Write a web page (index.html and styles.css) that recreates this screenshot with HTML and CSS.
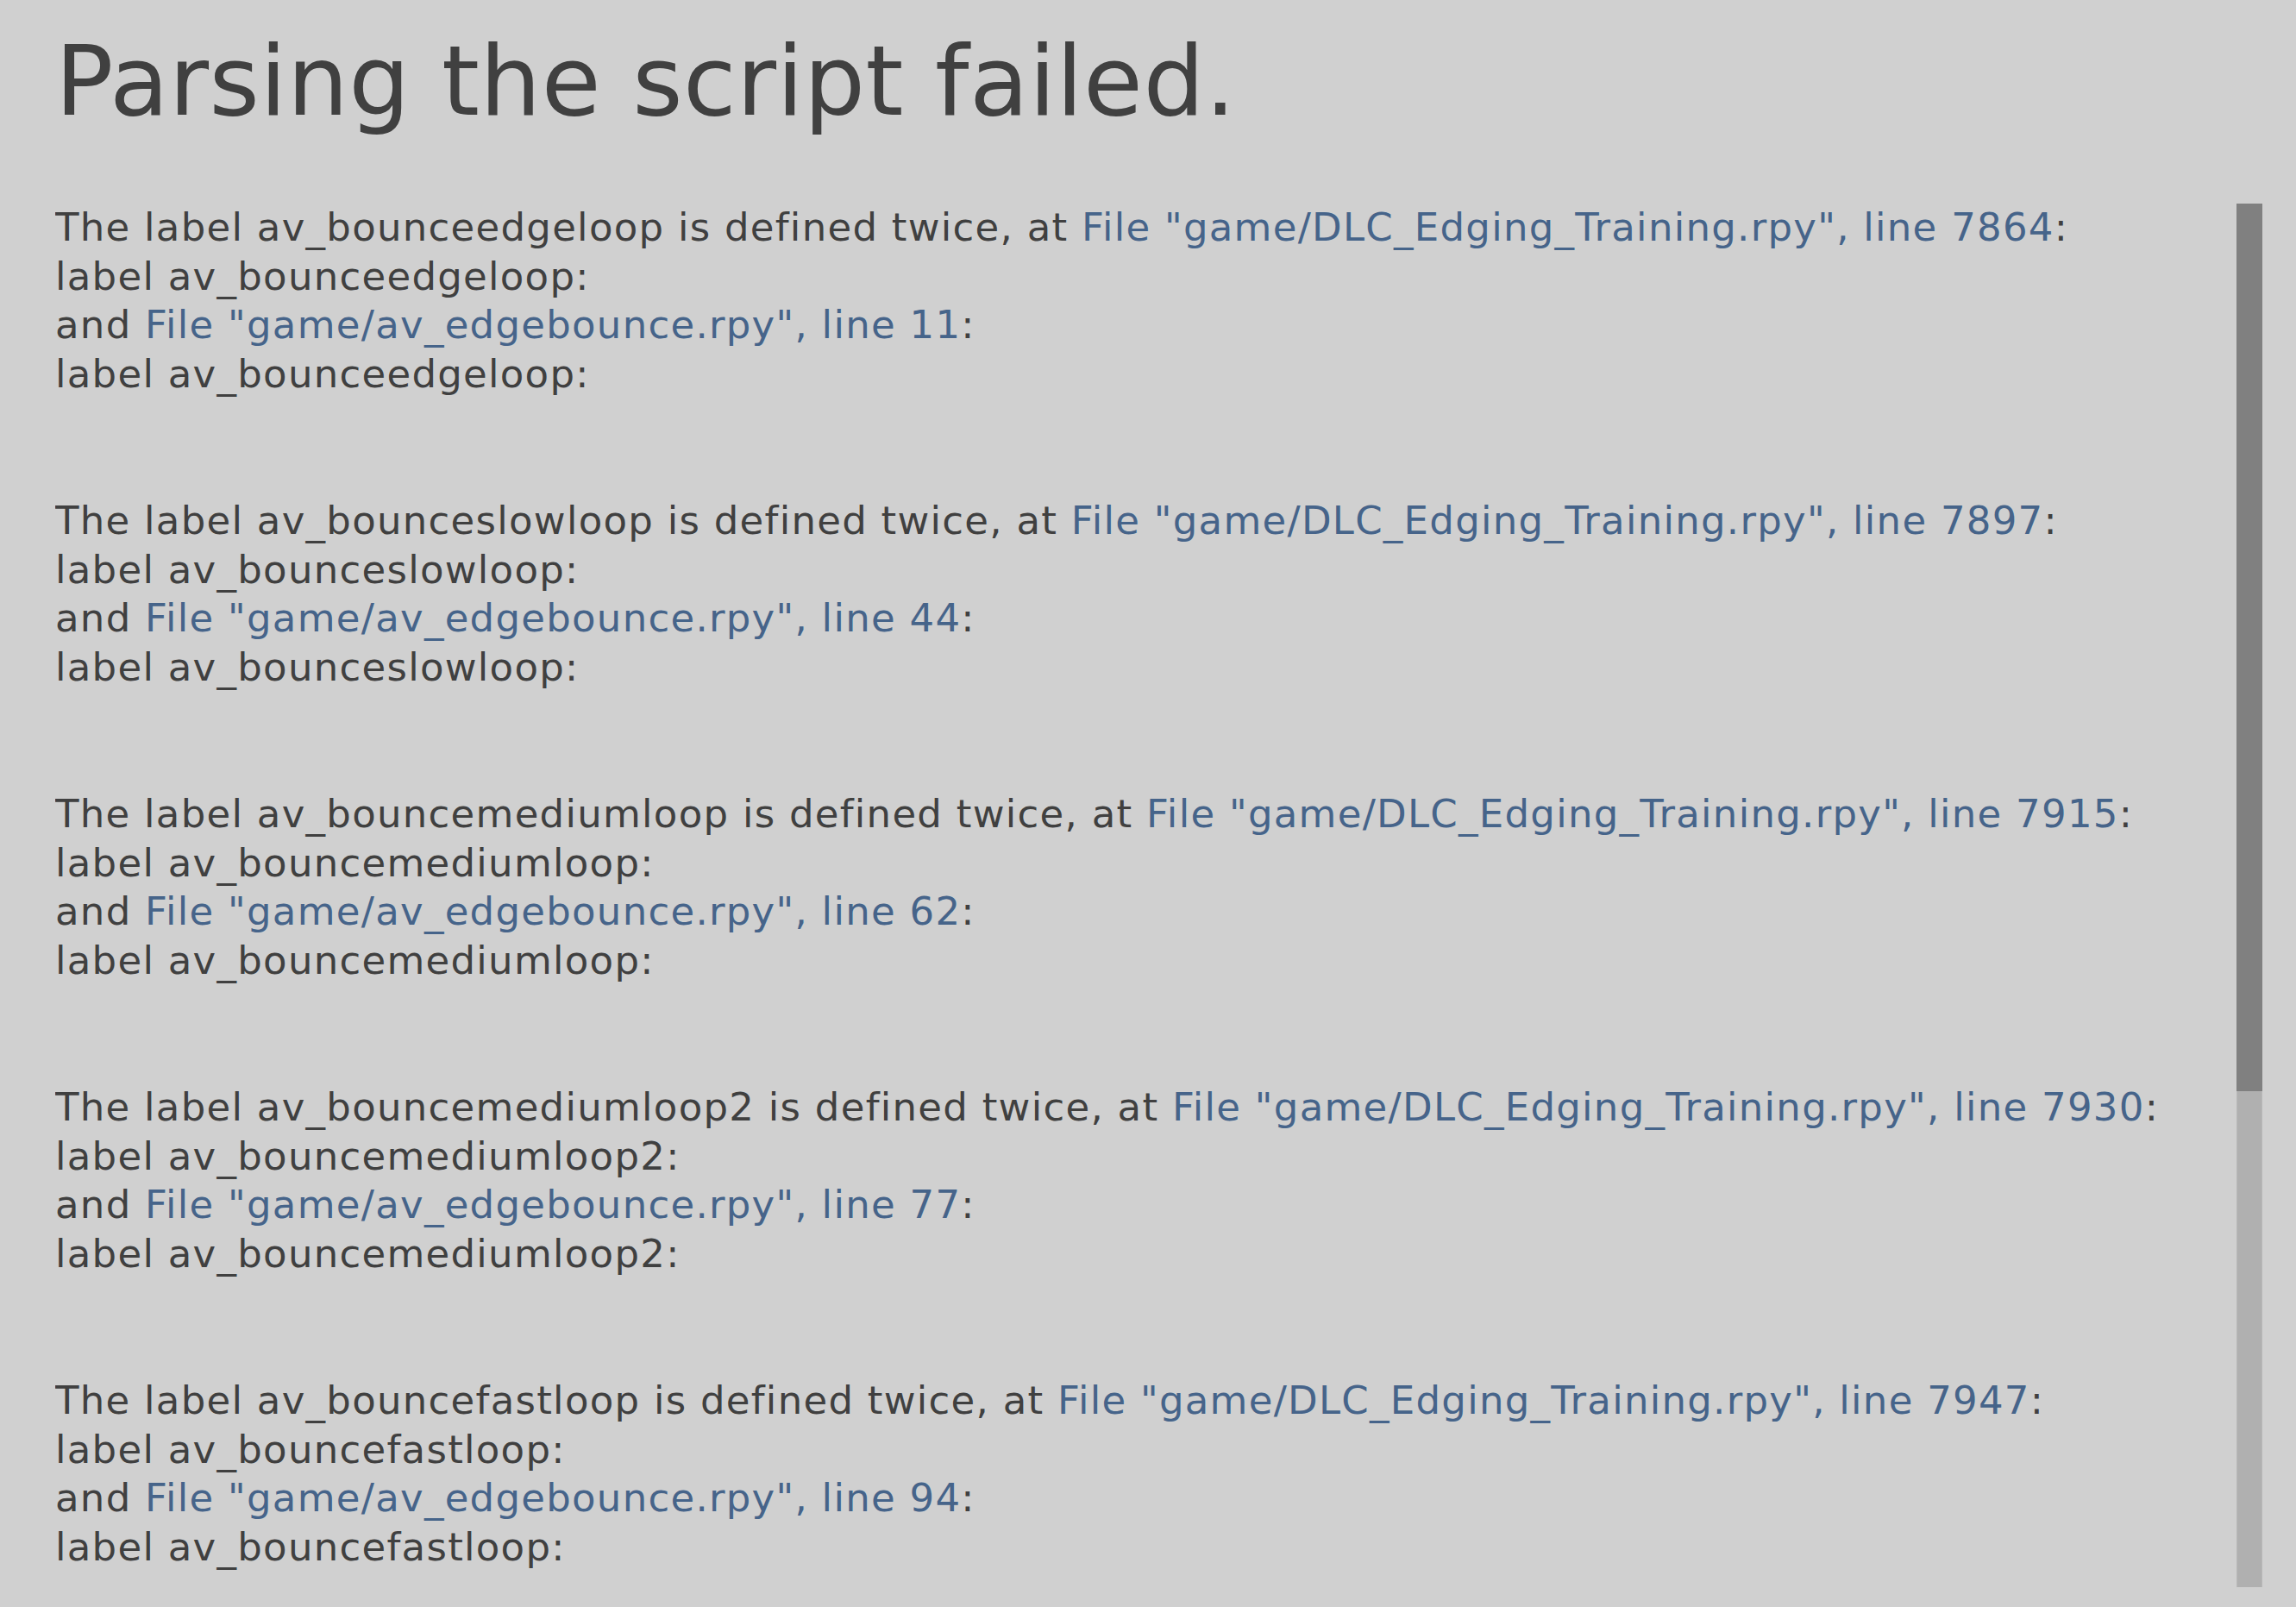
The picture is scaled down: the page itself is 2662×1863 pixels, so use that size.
FILE: index.html
```html
<!DOCTYPE html>
<html lang="en">
<head>
<meta charset="utf-8">
<title>Parsing the script failed.</title>
<link rel="stylesheet" href="styles.css">
</head>
<body>
<main class="screen">
  <h1 class="title">Parsing the script failed.</h1>
  <div class="pane">
    <div class="viewport">
      <p class="entry">The label av_bounceedgeloop is defined twice, at <span class="link">File "game/DLC_Edging_Training.rpy", line 7864</span>:<br>label av_bounceedgeloop:<br>and <span class="link">File "game/av_edgebounce.rpy", line 11</span>:<br>label av_bounceedgeloop:</p>
      <p class="entry">The label av_bounceslowloop is defined twice, at <span class="link">File "game/DLC_Edging_Training.rpy", line 7897</span>:<br>label av_bounceslowloop:<br>and <span class="link">File "game/av_edgebounce.rpy", line 44</span>:<br>label av_bounceslowloop:</p>
      <p class="entry">The label av_bouncemediumloop is defined twice, at <span class="link">File "game/DLC_Edging_Training.rpy", line 7915</span>:<br>label av_bouncemediumloop:<br>and <span class="link">File "game/av_edgebounce.rpy", line 62</span>:<br>label av_bouncemediumloop:</p>
      <p class="entry">The label av_bouncemediumloop2 is defined twice, at <span class="link">File "game/DLC_Edging_Training.rpy", line 7930</span>:<br>label av_bouncemediumloop2:<br>and <span class="link">File "game/av_edgebounce.rpy", line 77</span>:<br>label av_bouncemediumloop2:</p>
      <p class="entry">The label av_bouncefastloop is defined twice, at <span class="link">File "game/DLC_Edging_Training.rpy", line 7947</span>:<br>label av_bouncefastloop:<br>and <span class="link">File "game/av_edgebounce.rpy", line 94</span>:<br>label av_bouncefastloop:</p>
    </div>
    <div class="scrollbar">
      <div class="thumb"></div>
    </div>
  </div>
</main>
</body>
</html>
```
FILE: styles.css
```css
html, body {
  margin: 0;
  padding: 0;
  background: #d0d0d0;
}

.screen {
  height: 1863px;
  overflow: hidden;
  font-family: "DejaVu Sans", "Liberation Sans", sans-serif;
  color: #404040;
}

.title {
  margin: 29px 0 0 64px;
  font-size: 112px;
  font-weight: normal;
  line-height: normal;
  letter-spacing: 0.45px;
  color: #404040;
}

.pane {
  display: flex;
  margin-top: 77px;
  padding: 0 39px 0 64px;
  height: 1604px;
}

.viewport {
  flex: 1;
  overflow: hidden;
  font-size: 45px;
  line-height: 56.67px;
  letter-spacing: 1.27px;
}

.entry {
  margin: 0 0 113.33px 0;
  white-space: nowrap;
}

.link {
  color: #46648a;
}

.scrollbar {
  width: 30px;
  height: 1604px;
  background: #b0b0b0;
  box-shadow: inset 6px 0 0 -5px #b8b8b8, inset -6px 0 0 -5px #b8b8b8;
  display: flex;
  flex-direction: column;
}

.thumb {
  height: 1029px;
  background: #808080;
}
```
